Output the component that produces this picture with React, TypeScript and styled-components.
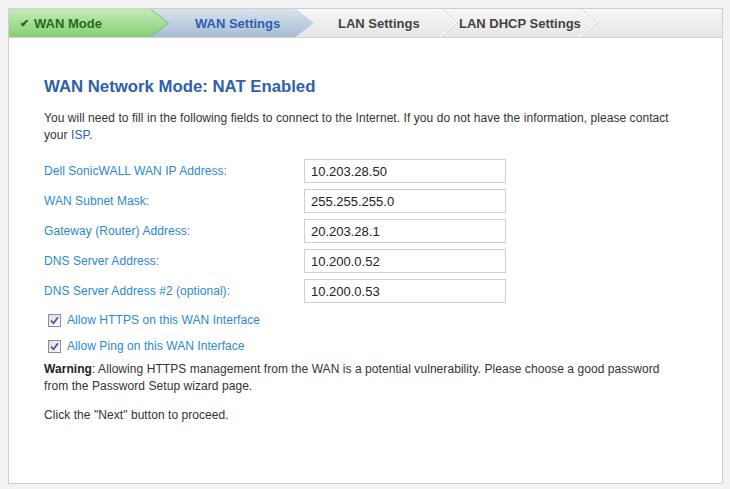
import React from 'react';
import styled, { createGlobalStyle, css } from 'styled-components';

const GlobalStyle = createGlobalStyle`
  html, body {
    margin: 0;
    padding: 0;
    background: #f2f2f2;
  }
  body {
    padding: 8px;
    font-family: "Liberation Sans", Arial, sans-serif;
    font-size: 12px;
    color: #333;
  }
`;

const Panel = styled.div`
  width: 713px;
  height: 474px;
  background: #fff;
  border: 1px solid #cfcfcf;
  display: flex;
  flex-direction: column;
`;

const TabBar = styled.div`
  display: flex;
  height: 28px;
  background: linear-gradient(#f7f7f7, #e6e6e6);
  border-bottom: 1px solid #d2d2d2;
`;

type TabKind = 'done' | 'active' | 'todo';

const tabFill = {
  done: 'linear-gradient(#c3ebb9, #86cf76)',
  active: 'linear-gradient(#d8e3ee, #a7bdd4)',
  todo: 'transparent',
};

const tabEdge = {
  done: '#5dbb4d',
  active: '#c5d4e3',
  todo: '#cfcfcf',
};

const tabText = {
  done: '#1f6e17',
  active: '#2f5fad',
  todo: '#444',
};

const Tab = styled.div<{ $kind: TabKind; $w: number; $pl: number; $z: number }>`
  position: relative;
  z-index: ${(p) => p.$z};
  box-sizing: border-box;
  width: ${(p) => p.$w}px;
  padding-left: ${(p) => p.$pl}px;
  display: flex;
  align-items: center;
  font-size: 13px;
  font-weight: bold;
  color: ${(p) => tabText[p.$kind]};
  background: ${(p) => tabFill[p.$kind]};
  white-space: nowrap;

  &::before,
  &::after {
    content: '';
    position: absolute;
    top: 0;
    height: 100%;
    width: 18px;
  }

  ${(p) =>
    p.$kind === 'todo'
      ? css`
          &::before {
            right: -18px;
            background: ${tabEdge.todo};
            clip-path: polygon(0 0, 2px 0, 100% 50%, 2px 100%, 0 100%, calc(100% - 2px) 50%);
          }
          &::after {
            right: -17px;
            background: #fbfbfb;
            clip-path: polygon(0 0, 2px 0, 100% 50%, 2px 100%, 0 100%, calc(100% - 2px) 50%);
          }
        `
      : css`
          &::before {
            right: -19px;
            background: ${tabEdge[p.$kind]};
            clip-path: polygon(0 0, 100% 50%, 0 100%);
          }
          &::after {
            right: -18px;
            background: ${tabFill[p.$kind]};
            clip-path: polygon(0 0, 100% 50%, 0 100%);
          }
        `}
`;

const Check = styled.span`
  margin-right: 5px;
  font-size: 11px;
`;

const Content = styled.div`
  padding: 39px 35px 0 35px;
  letter-spacing: 0.06px;
`;

const Heading = styled.h2`
  margin: 0;
  font-size: 16.75px;
  line-height: 20px;
  font-weight: bold;
  letter-spacing: 0;
  color: #2f5fad;
`;

const Para = styled.p<{ $top: number; $maxW?: number }>`
  margin: ${(p) => p.$top}px 0 0;
  max-width: ${(p) => (p.$maxW ? `${p.$maxW}px` : 'none')};
  line-height: 17px;
  color: #333;
`;

const Link = styled.span`
  color: #2f5fad;
`;

const Form = styled.div`
  margin-top: 15px;
  display: grid;
  grid-template-columns: 260px 202px;
  row-gap: 6px;
  align-items: center;
`;

const Label = styled.label`
  color: #2a89d2;
  font-size: 12px;
`;

const Field = styled.input`
  box-sizing: border-box;
  width: 202px;
  height: 24px;
  border: 1px solid #cfcfcf;
  padding: 0 6px;
  font-family: "Liberation Sans", Arial, sans-serif;
  font-size: 13px;
  color: #222;
  outline: none;
`;

const CheckRow = styled.label<{ $top: number }>`
  display: flex;
  align-items: center;
  height: 20px;
  margin-top: ${(p) => p.$top}px;
  padding-left: 4px;
  color: #2a89d2;
`;

const Box = styled.span`
  box-sizing: border-box;
  width: 13px;
  height: 13px;
  border: 1px solid #8e8f8f;
  background: linear-gradient(135deg, #dcdcdc, #fbfbfb);
  margin-right: 6px;
  display: flex;
  align-items: center;
  justify-content: center;
`;

const Bold = styled.b`
  color: #222;
`;

const tabs: { label: string; kind: TabKind; w: number; pl: number }[] = [
  { label: 'WAN Mode', kind: 'done', w: 141, pl: 11 },
  { label: 'WAN Settings', kind: 'active', w: 145, pl: 45 },
  { label: 'LAN Settings', kind: 'todo', w: 145, pl: 43 },
  { label: 'LAN DHCP Settings', kind: 'todo', w: 140, pl: 19 },
];

const fields = [
  ['Dell SonicWALL WAN IP Address:', '10.203.28.50'],
  ['WAN Subnet Mask:', '255.255.255.0'],
  ['Gateway (Router) Address:', '20.203.28.1'],
  ['DNS Server Address:', '10.200.0.52'],
  ['DNS Server Address #2 (optional):', '10.200.0.53'],
];

const Tick = () => (
  <svg width="9" height="9" viewBox="0 0 9 9">
    <path d="M1 4.5 L3.5 7.2 L8 1.2" fill="none" stroke="#3a4f9e" strokeWidth="1.6" />
  </svg>
);

const App = () => (
  <>
    <GlobalStyle />
    <Panel>
      <TabBar>
        {tabs.map((t, i) => (
          <Tab key={t.label} $kind={t.kind} $w={t.w} $pl={t.pl} $z={10 - i}>
            {t.kind === 'done' && <Check>✔</Check>}
            {t.label}
          </Tab>
        ))}
      </TabBar>
      <Content>
        <Heading>WAN Network Mode: NAT Enabled</Heading>
        <Para $top={13}>
          You will need to fill in the following fields to connect to the Internet. If you do not have the information, please contact
          your <Link>ISP</Link>.
        </Para>
        <Form>
          {fields.map(([label, value]) => (
            <React.Fragment key={label}>
              <Label>{label}</Label>
              <Field defaultValue={value} />
            </React.Fragment>
          ))}
        </Form>
        <CheckRow $top={7}>
          <Box><Tick /></Box>
          Allow HTTPS on this WAN Interface
        </CheckRow>
        <CheckRow $top={6}>
          <Box><Tick /></Box>
          Allow Ping on this WAN Interface
        </CheckRow>
        <Para $top={5} $maxW={630}>
          <Bold>Warning</Bold>: Allowing HTTPS management from the WAN is a potential vulnerability. Please choose a good password
          from the Password Setup wizard page.
        </Para>
        <Para $top={12}>Click the "Next" button to proceed.</Para>
      </Content>
    </Panel>
  </>
);

export default App;
